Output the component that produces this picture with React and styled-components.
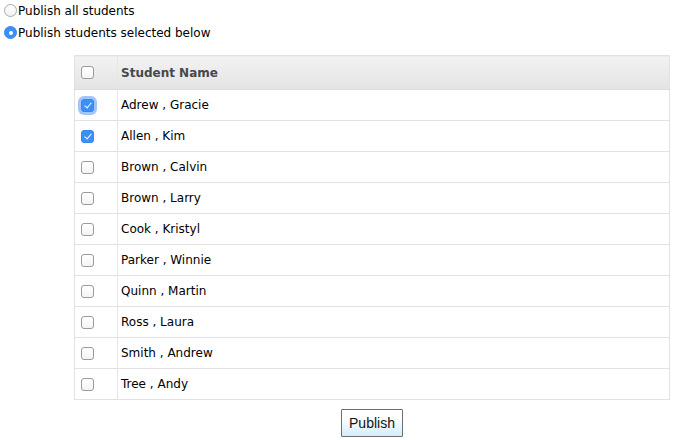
import React, { useState } from "react";
import styled, { createGlobalStyle } from "styled-components";

const GlobalStyle = createGlobalStyle`
  body {
    margin: 0;
    background: #fff;
    font-family: "DejaVu Sans", Verdana, sans-serif;
    font-size: 12px;
    color: #000;
  }
`;

const Page = styled.div`
  padding-top: 0;
`;

const RadioRow = styled.label`
  display: flex;
  align-items: center;
  height: 23px;
  padding-left: 4px;
  cursor: pointer;
  &:first-child {
    height: 21px;
  }
`;

const Radio = styled.input.attrs({ type: "radio" })`
  appearance: none;
  margin: 0 1px 0 0;
  width: 13px;
  height: 13px;
  border-radius: 50%;
  border: 1px solid #a9a9a9;
  background: linear-gradient(#fff, #f2f2f2);
  box-sizing: border-box;
  position: relative;
  &:checked {
    border-color: #3a86f0;
    background: #3b8ff6;
  }
  &:checked::after {
    content: "";
    position: absolute;
    left: 3.5px;
    top: 3.5px;
    width: 4px;
    height: 4px;
    border-radius: 50%;
    background: #fff;
  }
`;

const Table = styled.table`
  margin: 11px 0 0 74px;
  width: 596px;
  border-collapse: collapse;
  border: 1px solid #e2e2e2;
`;

const HeadCell = styled.th`
  height: 33px;
  padding: 0 0 0 ${(p) => (p.$check ? "6px" : "3px")};
  text-align: left;
  font-weight: bold;
  color: #44494a;
  background: linear-gradient(#f3f3f3, #e3e3e3);
  border-bottom: 1px solid #dcdcdc;
  border-right: ${(p) => (p.$check ? "1px solid #e6e6e6" : "none")};
  width: ${(p) => (p.$check ? "36px" : "auto")};
`;

const Cell = styled.td`
  height: 30px;
  padding: 0 0 0 ${(p) => (p.$check ? "6px" : "3px")};
  border-top: 1px solid #e2e2e2;
  border-right: ${(p) => (p.$check ? "1px solid #e6e6e6" : "none")};
  vertical-align: middle;
`;

const Check = styled.input.attrs({ type: "checkbox" })`
  appearance: none;
  display: block;
  margin: 0;
  width: 13px;
  height: 13px;
  border-radius: 3px;
  border: 1px solid #9b9b9b;
  background: linear-gradient(#fff, #f4f4f4);
  box-sizing: border-box;
  position: relative;
  box-shadow: ${(p) => (p.$focus ? "0 0 0 3px rgba(90,150,240,0.55)" : "none")};
  &:checked {
    border-color: #3a86f0;
    background: #3b8ff6;
  }
  &:checked::after {
    content: "";
    position: absolute;
    left: 3.5px;
    top: 1px;
    width: 3px;
    height: 6px;
    border: solid #fff;
    border-width: 0 1.6px 1.6px 0;
    transform: rotate(40deg);
  }
`;

const Footer = styled.div`
  width: 596px;
  margin-left: 74px;
  display: flex;
  justify-content: center;
  padding-top: 9px;
`;

const Button = styled.button`
  height: 28px;
  padding: 0 7px;
  font-family: "Liberation Sans", Arial, sans-serif;
  font-size: 14px;
  color: #111;
  border: 1px solid #6e6e6e;
  border-radius: 1px;
  background: linear-gradient(#ffffff 30%, #d3ecfb);
  cursor: pointer;
`;

const students = [
  "Adrew , Gracie",
  "Allen , Kim",
  "Brown , Calvin",
  "Brown , Larry",
  "Cook , Kristyl",
  "Parker , Winnie",
  "Quinn , Martin",
  "Ross , Laura",
  "Smith , Andrew",
  "Tree , Andy",
];

export default function App() {
  const [mode, setMode] = useState("selected");
  const [checked, setChecked] = useState([true, true, false, false, false, false, false, false, false, false]);

  const toggle = (i) => setChecked((c) => c.map((v, j) => (j === i ? !v : v)));

  return (
    <Page>
      <GlobalStyle />
      <RadioRow>
        <Radio name="pub" checked={mode === "all"} onChange={() => setMode("all")} />
        Publish all students
      </RadioRow>
      <RadioRow>
        <Radio name="pub" checked={mode === "selected"} onChange={() => setMode("selected")} />
        Publish students selected below
      </RadioRow>
      <Table>
        <thead>
          <tr>
            <HeadCell $check>
              <Check
                checked={checked.every(Boolean)}
                onChange={(e) => setChecked(checked.map(() => e.target.checked))}
              />
            </HeadCell>
            <HeadCell>Student Name</HeadCell>
          </tr>
        </thead>
        <tbody>
          {students.map((name, i) => (
            <tr key={name}>
              <Cell $check>
                <Check $focus={i === 0} checked={checked[i]} onChange={() => toggle(i)} />
              </Cell>
              <Cell>{name}</Cell>
            </tr>
          ))}
        </tbody>
      </Table>
      <Footer>
        <Button>Publish</Button>
      </Footer>
    </Page>
  );
}
